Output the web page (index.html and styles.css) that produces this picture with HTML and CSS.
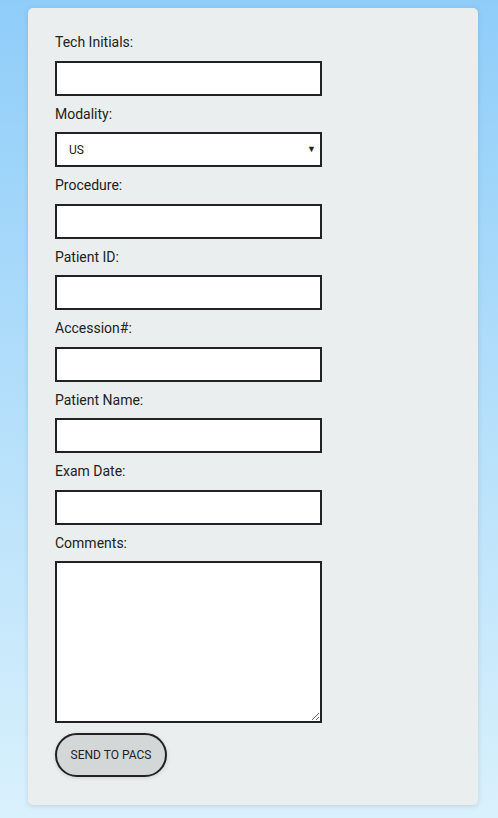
FILE: index.html
```html
<!DOCTYPE html>
<html>
<head>
<meta charset="utf-8">
<link rel="stylesheet" href="styles.css">
</head>
<body>
<form class="card">
  <label class="lbl" for="tech">Tech Initials:</label>
  <input class="field" id="tech" type="text">
  <label class="lbl" for="mod">Modality:</label>
  <div class="select-wrap">
    <select class="field select" id="mod"><option>US</option></select>
    <span class="arrow">▼</span>
  </div>
  <label class="lbl" for="proc">Procedure:</label>
  <input class="field" id="proc" type="text">
  <label class="lbl" for="pid">Patient ID:</label>
  <input class="field" id="pid" type="text">
  <label class="lbl" for="acc">Accession#:</label>
  <input class="field" id="acc" type="text">
  <label class="lbl" for="pname">Patient Name:</label>
  <input class="field" id="pname" type="text">
  <label class="lbl" for="edate">Exam Date:</label>
  <input class="field" id="edate" type="text">
  <label class="lbl" for="comm">Comments:</label>
  <textarea class="field area" id="comm"></textarea>
  <button class="btn" type="button">SEND TO PACS</button>
</form>
</body>
</html>
```
FILE: styles.css
```css
html {
  min-height: 100%;
  background: linear-gradient(to bottom, #8fcdf9 0%, #d9f1fc 100%);
}
body {
  margin: 0;
  padding: 8px 20px 14px 28px;
  font-family: Roboto, "Noto Sans", sans-serif;
  color: #222;
}
.card {
  width: 450px;
  box-sizing: border-box;
  background: #eaeeef;
  border-radius: 5px;
  box-shadow: 0 1px 5px rgba(60, 90, 110, 0.18);
  padding: 26px 27px 28px;
  display: flex;
  flex-direction: column;
  align-items: flex-start;
}
.lbl {
  display: block;
  font-size: 14px;
  line-height: 17px;
  margin-bottom: 9.5px;
}
.field {
  display: block;
  box-sizing: border-box;
  width: 267px;
  height: 35px;
  border: 2px solid #222;
  border-radius: 0;
  background: #fff;
  margin: 0 0 10px;
  padding: 0 12px;
  font-family: Roboto, sans-serif;
  font-size: 12px;
  color: #222;
  outline: none;
}
.select-wrap {
  position: relative;
  margin: 0 0 10px;
}
.select-wrap .field { margin: 0; }
.select {
  appearance: none;
  -webkit-appearance: none;
  padding-left: 12px;
}
.arrow {
  position: absolute;
  right: 6px;
  top: 11px;
  font-size: 9px;
  line-height: 12px;
  color: #222;
  pointer-events: none;
}
.area {
  height: 162px;
  resize: vertical;
  padding: 4px;
}
.btn {
  margin-top: 0;
  width: 112px;
  height: 44px;
  border: 2px solid #222;
  border-radius: 22px;
  background: #d4d7d8;
  font-family: Roboto, sans-serif;
  font-size: 12px;
  color: #222;
  padding: 0;
  box-shadow: 0 1px 4px rgba(0,0,0,0.12);
}
```
